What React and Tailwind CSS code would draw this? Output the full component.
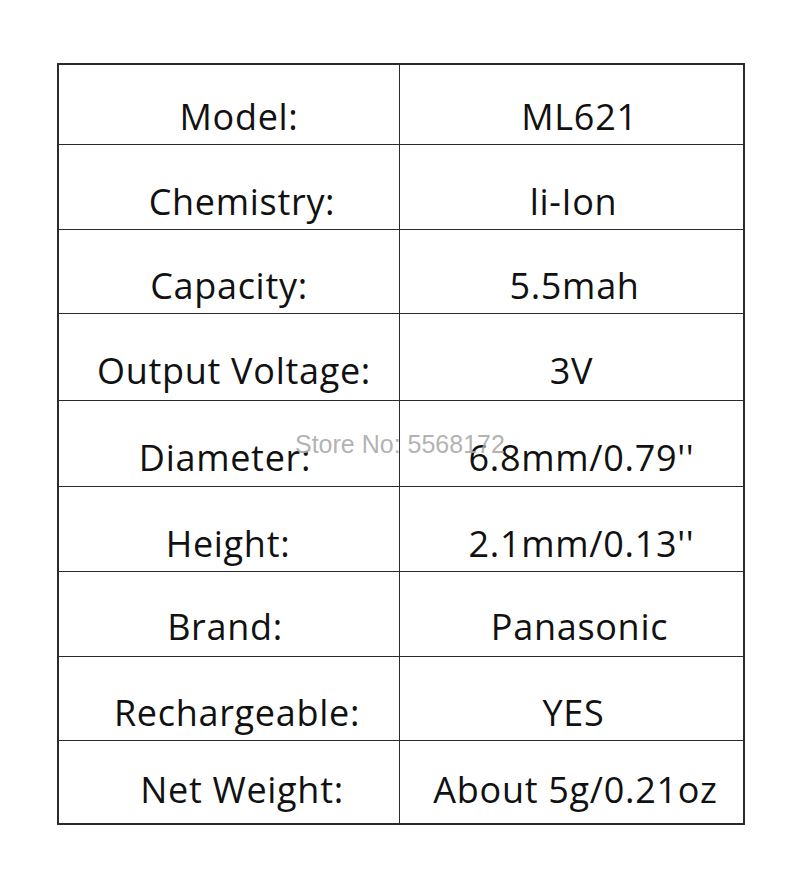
import React from "react";

const rows = [
  { k: "Model:", v: "ML621", row: "h-[80px] border-b", pb: "pb-[9px]", lx: "translate-x-[10px]", rx: "translate-x-[8px]" },
  { k: "Chemistry:", v: "li-Ion", row: "h-[85px] border-b", pb: "pb-[9px]", lx: "translate-x-[13px]", rx: "translate-x-[2px]" },
  { k: "Capacity:", v: "5.5mah", row: "h-[84px] border-b", pb: "pb-[9px]", lx: "translate-x-[0px]", rx: "translate-x-[3px]" },
  { k: "Output Voltage:", v: "3V", row: "h-[87px] border-b", pb: "pb-[11px]", lx: "translate-x-[5px]", rx: "translate-x-[0px]" },
  { k: "Diameter:", v: "6.8mm/0.79''", row: "h-[86px] border-b", pb: "pb-[10px]", lx: "-translate-x-[4px]", rx: "translate-x-[10px]" },
  { k: "Height:", v: "2.1mm/0.13''", row: "h-[85px] border-b", pb: "pb-[9px]", lx: "-translate-x-[1px]", rx: "translate-x-[10px]" },
  { k: "Brand:", v: "Panasonic", row: "h-[85px] border-b", pb: "pb-[11px]", lx: "-translate-x-[4px]", rx: "translate-x-[8px]" },
  { k: "Rechargeable:", v: "YES", row: "h-[84px] border-b", pb: "pb-[9px]", lx: "translate-x-[8px]", rx: "translate-x-[2px]" },
  { k: "Net Weight:", v: "About 5g/0.21oz", row: "h-[82px]", pb: "pb-[15px]", lx: "translate-x-[13px]", rx: "translate-x-[4px]" },
];

export default function App() {
  return (
    <div className="relative w-[800px] h-[890px] bg-white pt-[63px] pl-[57px] font-['Open_Sans','Noto_Sans',sans-serif]">
      <div className="w-[688px] border-2 border-[#2b2b2b] flex flex-col">
        {rows.map((r) => (
          <div key={r.k} className={"flex border-[#2b2b2b] " + r.row}>
            <div className={"w-[341px] border-r border-[#2b2b2b] flex items-end justify-center " + r.pb}>
              <span className={"text-[36px] leading-none text-[#111] tracking-[0.7px] whitespace-nowrap " + r.lx}>
                {r.k}
              </span>
            </div>
            <div className={"flex-1 flex items-end justify-center " + r.pb}>
              <span className={"text-[36px] leading-none text-[#111] tracking-[0.7px] whitespace-nowrap " + r.rx}>
                {r.v}
              </span>
            </div>
          </div>
        ))}
      </div>
      <div className="absolute left-[295px] top-[432px] text-[25px] leading-none text-[#a9a9a9]/90 whitespace-nowrap font-['Liberation_Sans',Arial,sans-serif]">
        Store No: 5568172
      </div>
    </div>
  );
}
